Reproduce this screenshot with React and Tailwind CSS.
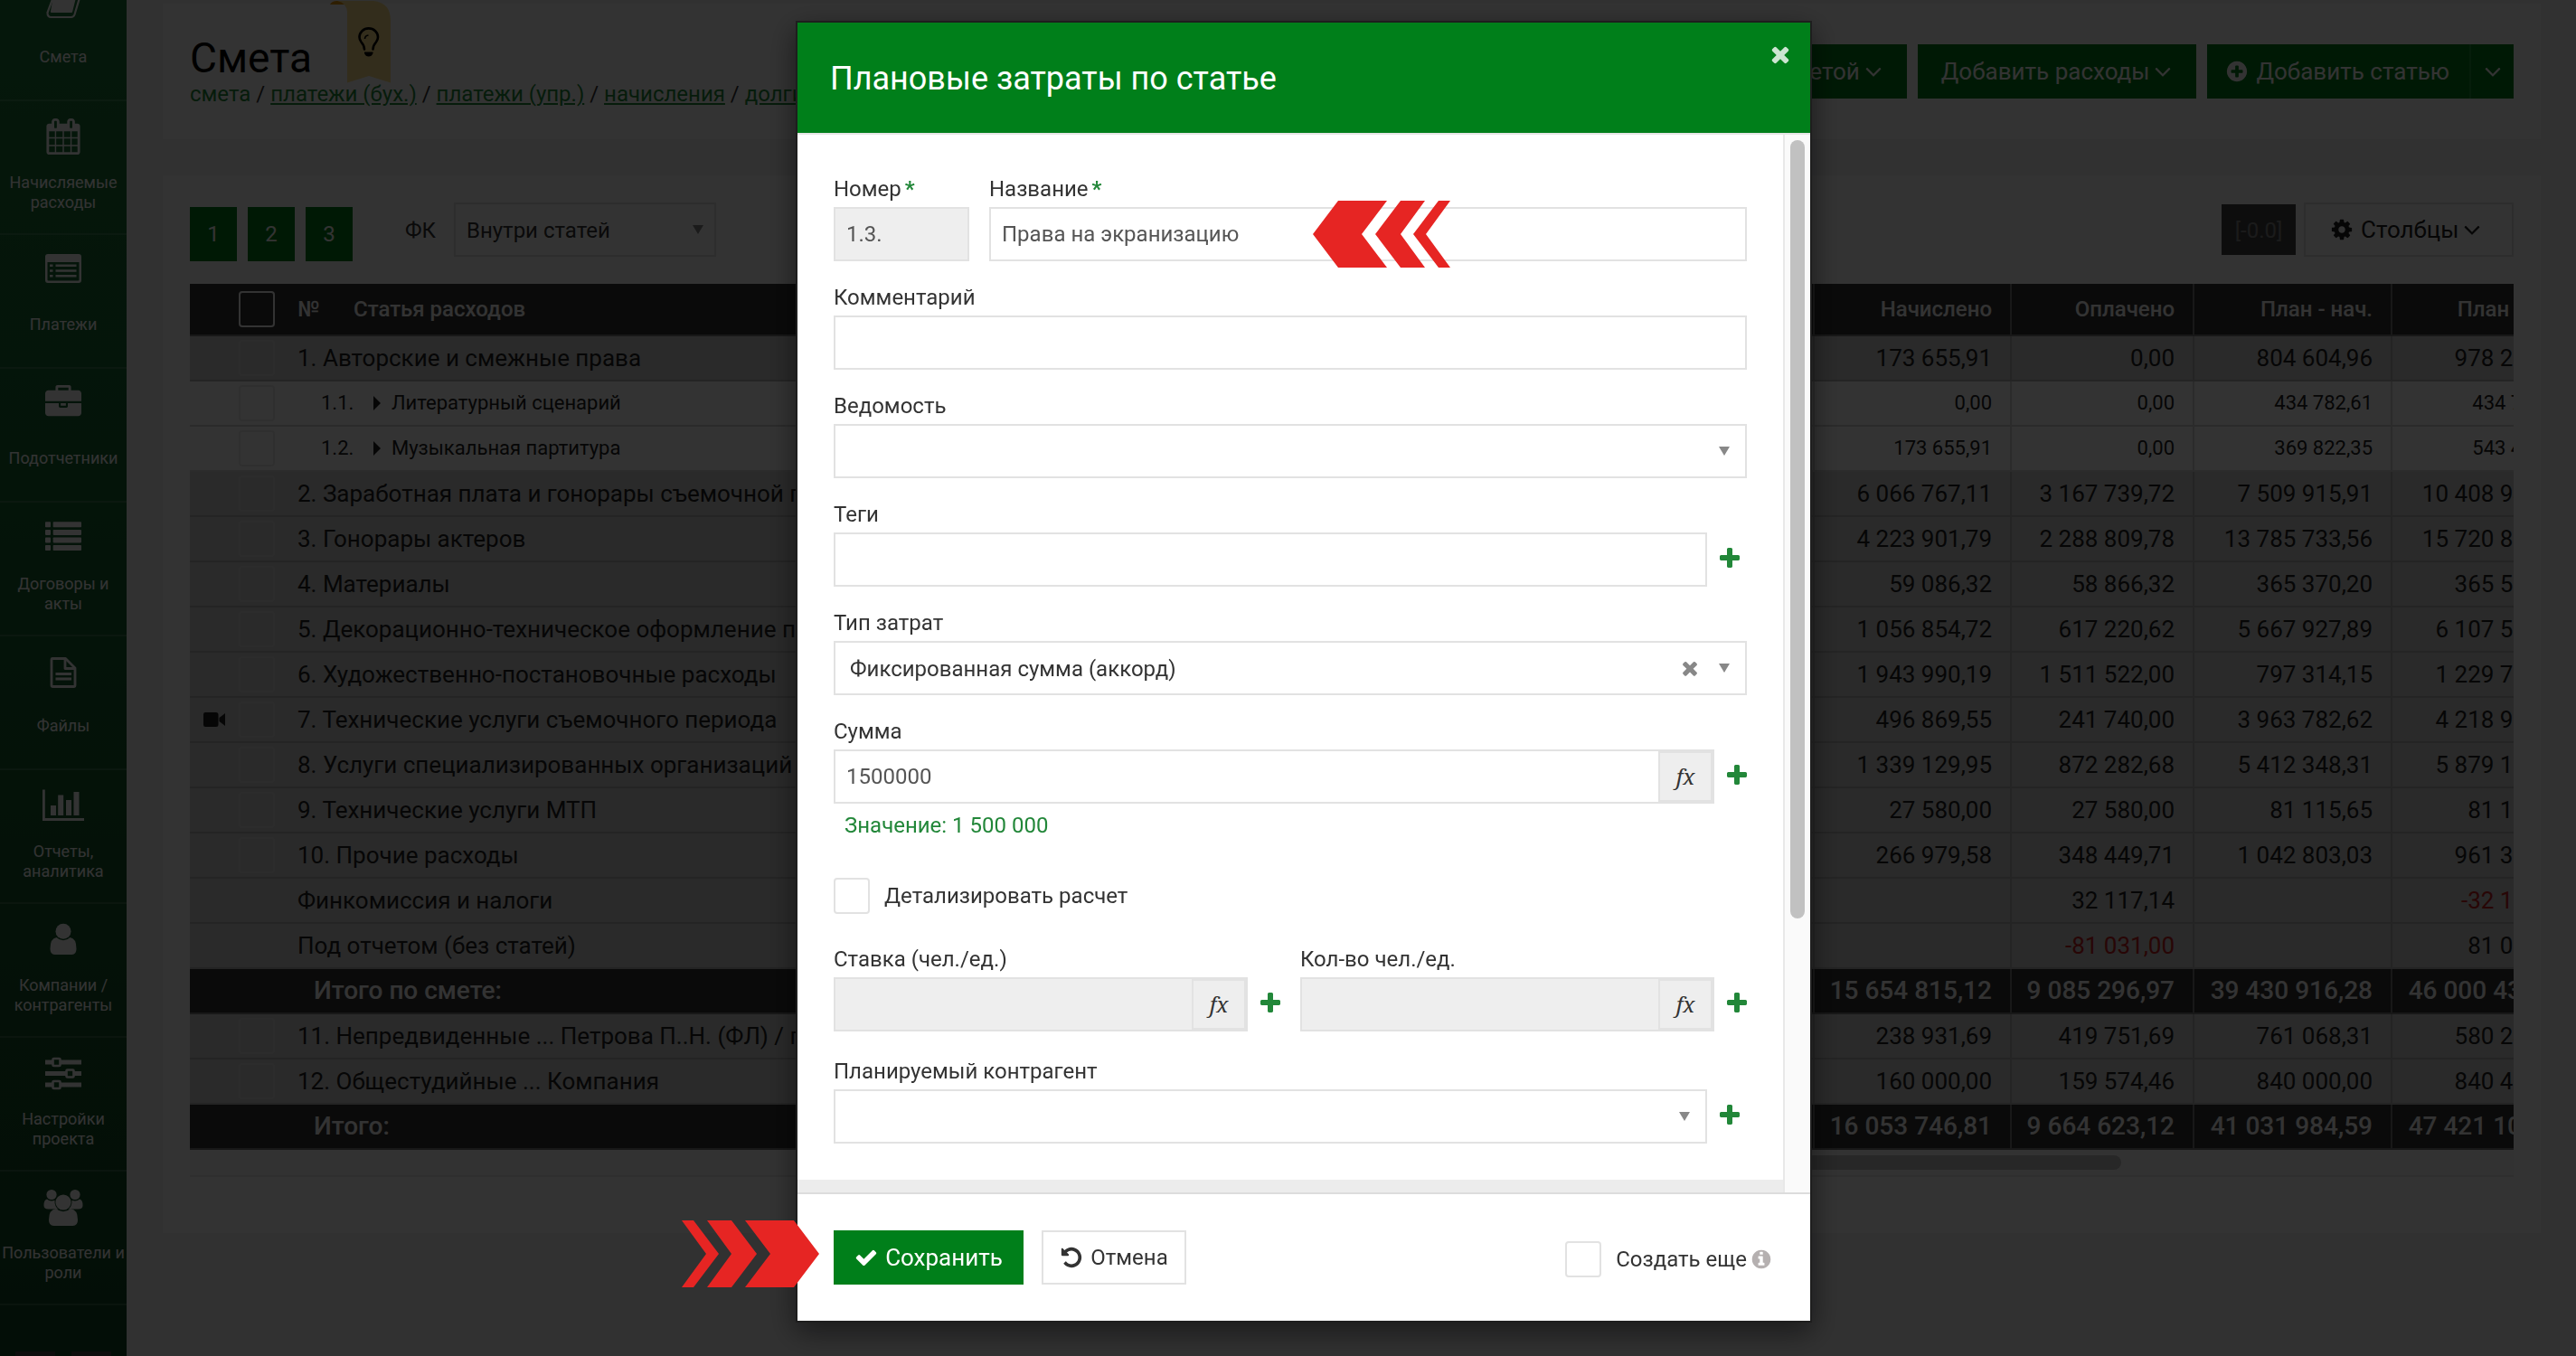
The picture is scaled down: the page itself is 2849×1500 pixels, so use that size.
import React from "react";

const PATHS = {
  times:
    "M1490 1322q0 40-28 68l-136 136q-28 28-68 28t-68-28l-294-294-294 294q-28 28-68 28t-68-28l-136-136q-28-28-28-68t28-68l294-294-294-294q-28-28-28-68t28-68l136-136q28-28 68-28t68 28l294 294 294-294q28-28 68-28t68 28l136 136q28 28 28 68t-28 68l-294 294 294 294q28 28 28 68z",
  plus:
    "M1600 736v192q0 40-28 68t-68 28h-416v416q0 40-28 68t-68 28h-192q-40 0-68-28t-28-68v-416h-416q-40 0-68-28t-28-68v-192q0-40 28-68t68-28h416v-416q0-40 28-68t68-28h192q40 0 68 28t28 68v416h416q40 0 68 28t28 68z",
  check:
    "M1671 566q0 40-28 68l-724 724-136 136q-28 28-68 28t-68-28l-136-136-362-362q-28-28-28-68t28-68l136-136q28-28 68-28t68 28l294 295 656-657q28-28 68-28t68 28l136 136q28 28 28 68z",
  undo:
    "M1664 896q0 156-61 298t-164 245-245 164-298 61q-172 0-327-72.5t-264-204.5q-7-10-6.5-22.5t8.5-20.5l137-138q10-9 25-9 16 2 23 12 73 95 179 147t225 52q104 0 198.5-40.5t163.5-109.5 109.5-163.5 40.5-198.5-40.5-198.5-109.5-163.5-163.5-109.5-198.5-40.5q-98 0-188 35.5t-160 101.5l137 138q31 30 14 69-17 40-59 40h-448q-26 0-45-19t-19-45v-448q0-42 40-59 39-17 69 14l130 129q107-101 244.5-156.5t284.5-55.5q156 0 298 61t245 164 164 245 61 298z",
  info:
    "M1152 1376v-160q0-14-9-23t-23-9h-96v-512q0-14-9-23t-23-9h-320q-14 0-23 9t-9 23v160q0 14 9 23t23 9h96v320h-96q-14 0-23 9t-9 23v160q0 14 9 23t23 9h448q14 0 23-9t9-23zm-128-896v-160q0-14-9-23t-23-9h-192q-14 0-23 9t-9 23v160q0 14 9 23t23 9h192q14 0 23-9t9-23zm640 416q0 209-103 385.5t-279.5 279.5-385.5 103-385.5-103-279.5-279.5-103-385.5 103-385.5 279.5-279.5 385.5-103 385.5 103 279.5 279.5 103 385.5z",
  plusCircle:
    "M1344 960v-128q0-26-19-45t-45-19h-256v-256q0-26-19-45t-45-19h-128q-26 0-45 19t-19 45v256h-256q-26 0-45 19t-19 45v128q0 26 19 45t45 19h256v256q0 26 19 45t45 19h128q26 0 45-19t19-45v-256h256q26 0 45-19t19-45zm320-64q0 209-103 385.5t-279.5 279.5-385.5 103-385.5-103-279.5-279.5-103-385.5 103-385.5 279.5-279.5 385.5-103 385.5 103 279.5 279.5 103 385.5z",
  gear:
    "M1152 896q0-106-75-181t-181-75-181 75-75 181 75 181 181 75 181-75 75-181zm512-109v222q0 12-8 23t-20 13l-185 28q-19 54-39 91 35 50 107 138 10 12 10 25t-9 23q-27 37-99 108t-94 71q-12 0-26-9l-138-108q-44 23-91 38-16 136-29 186-7 28-36 28h-222q-14 0-24.5-8.5t-11.5-21.5l-28-184q-49-16-90-37l-141 107q-10 9-25 9-14 0-25-11-126-114-165-168-7-10-7-23 0-12 8-23 15-21 51-66.5t54-70.5q-27-50-41-99l-183-27q-13-2-21-12.5t-8-23.5v-222q0-12 8-23t19-13l186-28q14-46 39-92-40-57-107-138-10-12-10-24 0-10 9-23 26-36 98.5-107.5t94.5-71.5q13 0 26 10l138 107q44-23 91-38 16-136 29-186 7-28 36-28h222q14 0 24.5 8.5t11.5 21.5l28 184q49 16 90 37l142-107q9-9 24-9 13 0 25 10 129 119 165 170 7 8 7 22 0 12-8 23-15 21-51 66.5t-54 70.5q26 50 41 98l183 28q13 2 21 12.5t8 23.5z",
  angleDown:
    "M1395 736q0 13-10 23l-466 466q-10 10-23 10t-23-10l-466-466q-10-10-10-23t10-23l50-50q10-10 23-10t23 10l393 393 393-393q10-10 23-10t23 10l50 50q10 10 10 23z",
  calendar:
    "M192 1664h288v-288h-288v288zm352 0h320v-288h-320v288zm-352-352h288v-320h-288v320zm352 0h320v-320h-320v320zm-352-384h288v-288h-288v288zm736 736h320v-288h-320v288zm-384-736h320v-288h-320v288zm768 736h288v-288h-288v288zm-384-352h320v-320h-320v320zm-352-864v-288q0-13-9.5-22.5t-22.5-9.5h-64q-13 0-22.5 9.5t-9.5 22.5v288q0 13 9.5 22.5t22.5 9.5h64q13 0 22.5-9.5t9.5-22.5zm736 864h288v-320h-288v320zm-384-384h320v-288h-320v288zm384 0h288v-288h-288v288zm32-480v-288q0-13-9.5-22.5t-22.5-9.5h-64q-13 0-22.5 9.5t-9.5 22.5v288q0 13 9.5 22.5t22.5 9.5h64q13 0 22.5-9.5t9.5-22.5zm384-64v1280q0 52-38 90t-90 38h-1408q-52 0-90-38t-38-90v-1280q0-52 38-90t90-38h128v-96q0-66 47-113t113-47h64q66 0 113 47t47 113v96h384v-96q0-66 47-113t113-47h64q66 0 113 47t47 113v96h128q52 0 90 38t38 90z",
  briefcase:
    "M640 256h512v-128h-512v128zm1152 640v480q0 66-47 113t-113 47h-1472q-66 0-113-47t-47-113v-480h672v160q0 26 19 45t45 19h320q26 0 45-19t19-45v-160h672zm-768 0v128h-256v-128h256zm768-480v384h-1792v-384q0-66 47-113t113-47h352v-160q0-40 28-68t68-28h576q40 0 68 28t28 68v160h352q66 0 113 47t47 113z",
};

function Icon({ name, className }) {
  return (
    <svg viewBox="0 0 1792 1792" fill="currentColor" aria-hidden="true" className={className}>
      <path d={PATHS[name]} />
    </svg>
  );
}

const NAV = [
  {
    label: "Смета",
    icon: (
      <g fill="none" stroke="currentColor" strokeWidth="2.2" strokeLinejoin="round">
        <path d="M15 6h24L32 34H10z" fill="currentColor" />
        <path d="M14 12L5.500 35q0 5 4 5h22q3 0 4-3L43 12" />
      </g>
    ),
  },
  { label: "Начисляемые расходы", icon: <path transform="translate(3 4) scale(.02232)" d={PATHS.calendar} /> },
  {
    label: "Платежи",
    icon: (
      <g>
        <path fillRule="evenodd" d="M6 6h34q3 0 3 3v26q0 3-3 3H6q-3 0-3-3V9q0-3 3-3zM5.500 15v19.500q0 1 1 1h33q1 0 1-1V15z" />
        <path d="M8 17.500h3.500v2.500H8zM14.500 17.500h23v2.500h-23zM8 23.300h3.500v2.500H8zM14.500 23.300h23v2.500h-23zM8 29h3.500v2.500H8zM14.500 29h23v2.500h-23z" />
      </g>
    ),
  },
  { label: "Подотчетники", icon: <path transform="translate(3 3) scale(.02232)" d={PATHS.briefcase} /> },
  {
    label: "Договоры и акты",
    icon: (
      <g>
        {[6.3, 14.9, 23.4, 32].map((y) => (
          <g key={y}>
            <rect x="3" y={y} width="6" height="6" rx=".8" />
            <rect x="11.700" y={y} width="31.300" height="6" rx=".8" />
          </g>
        ))}
      </g>
    ),
  },
  {
    label: "Файлы",
    icon: (
      <g fill="none" stroke="currentColor" strokeWidth="2.8" strokeLinejoin="round">
        <path d="M11 9.500h14.500l10.500 10.500V39q0 1.500-1.500 1.500h-23q-1.500 0-1.500-1.500V11q0-1.500 1-1.500z" />
        <path d="M25 9.500V20.500H36M14.500 26.500h17.500M14.500 32h17.500" />
      </g>
    ),
  },
  {
    label: "Отчеты, аналитика",
    icon: <path d="M0 6.500h2.800V38H46v3H0zM9 24h6v11H9zM17.200 12.500h6V35h-6zM26 18h6v17h-6zM34.500 9h6v26h-6z" />,
  },
  {
    label: "Компании / контрагенты",
    icon: (
      <g>
        <circle cx="23" cy="15.200" r="8.500" />
        <path d="M15.500 22q3.300 3.200 7.500 3.200t7.500-3.200q7 1 7 12.500 0 6.500-5 6.500h-19q-5 0-5-6.500Q8.500 23 15.500 22z" />
      </g>
    ),
  },
  {
    label: "Настройки проекта",
    icon: (
      <g>
        <path d="M3 9.500h40v5H3zM3 22h40v5H3zM3 34.500h40v5H3z" />
        {[[15.5, 12], [30.5, 24.5], [15.5, 37]].map(([x, y]) => (
          <rect key={y} x={x - 4} y={y - 4} width="8" height="8" rx="1" fill="#185a2b" stroke="currentColor" strokeWidth="2.6" />
        ))}
      </g>
    ),
  },
  {
    label: "Пользователи и роли",
    icon: (
      <g>
        <circle cx="10" cy="10.500" r="5.600" />
        <circle cx="36" cy="10.500" r="5.600" />
        <path d="M5 15.500q2 2 5 2 2 0 3.500-.7-.3 7 4 9.700h-11q-5 0-5-4 0-6.500 3.500-7zM41 15.500q-2 2-5 2-2 0-3.500-.7.300 7-4 9.700h11q5 0 5-4 0-6.500-3.500-7z" />
        <circle cx="23" cy="19" r="8.600" />
        <path d="M15 26q3.500 3.200 8 3.200t8-3.200q8 1 8 12.500 0 6.500-5.500 6.500h-21Q7 45 7 38.500 7 27 15 26z" />
      </g>
    ),
  },
];

const ROWS = [
  { name: "1. Авторские и смежные права", v: ["173 655,91", "0,00", "804 604,96", "978 260,87"] },
  { kind: "sub", num: "1.1.", name: "Литературный сценарий", v: ["0,00", "0,00", "434 782,61", "434 782,61"] },
  { kind: "sub", num: "1.2.", name: "Музыкальная партитура", v: ["173 655,91", "0,00", "369 822,35", "543 478,26"] },
  { name: "2. Заработная плата и гонорары съемочной группы", v: ["6 066 767,11", "3 167 739,72", "7 509 915,91", "10 408 943,30"] },
  { name: "3. Гонорары актеров", v: ["4 223 901,79", "2 288 809,78", "13 785 733,56", "15 720 825,57"] },
  { name: "4. Материалы", v: ["59 086,32", "58 866,32", "365 370,20", "365 590,20"] },
  { name: "5. Декорационно-техническое оформление площадок", v: ["1 056 854,72", "617 220,62", "5 667 927,89", "6 107 561,99"] },
  { name: "6. Художественно-постановочные расходы", v: ["1 943 990,19", "1 511 522,00", "797 314,15", "1 229 782,34"] },
  { name: "7. Технические услуги съемочного периода", camera: true, v: ["496 869,55", "241 740,00", "3 963 782,62", "4 218 912,17"] },
  { name: "8. Услуги специализированных организаций", v: ["1 339 129,95", "872 282,68", "5 412 348,31", "5 879 195,58"] },
  { name: "9. Технические услуги МТП", v: ["27 580,00", "27 580,00", "81 115,65", "81 115,65"] },
  { name: "10. Прочие расходы", v: ["266 979,58", "348 449,71", "1 042 803,03", "961 332,90"] },
  { kind: "plain", name: "Финкомиссия и налоги", v: ["", "32 117,14", "", "-32 117,14"] },
  { kind: "plain", name: "Под отчетом (без статей)", v: ["", "-81 031,00", "", "81 031,00"] },
  { kind: "total", name: "Итого по смете:", v: ["15 654 815,12", "9 085 296,97", "39 430 916,28", "46 000 434,43"] },
  { name: "11. Непредвиденные ... Петрова П..Н. (ФЛ) / прочее", v: ["238 931,69", "419 751,69", "761 068,31", "580 248,31"] },
  { name: "12. Общестудийные ... Компания", v: ["160 000,00", "159 574,46", "840 000,00", "840 425,54"] },
  { kind: "total", name: "Итого:", v: ["16 053 746,81", "9 664 623,12", "41 031 984,59", "47 421 108,28"] },
];

const HEADS = ["Начислено", "Оплачено", "План - нач.", "План - опл."];

function Sidebar() {
  return (
    <nav className="w-[140px] shrink-0 overflow-hidden bg-linear-to-b from-[#1a7538] to-[#124723] text-white">
      <ul className="-mt-[38px]">
        {NAV.map((n) => (
          <li key={n.label} className="h-[148px] border-t-2 border-white/15">
            <a href="#" className="flex flex-col items-center pt-[15px]">
              <svg viewBox="0 0 46 46" className="size-[46px]" fill="currentColor" aria-hidden="true">
                {n.icon}
              </svg>
              <span
                className={`mt-[18px] flex w-[140px] items-center justify-center text-center text-lg leading-[22px] ${n.label.includes(" ") ? "h-11" : "h-10"}`}
              >
                {n.label}
              </span>
            </a>
          </li>
        ))}
        <li className="flex justify-center gap-[18px] border-t-2 border-white/15 pt-[51px]">
          <span className="h-10 w-11 bg-[#444]" />
          <span className="h-10 w-11 bg-[#444]" />
        </li>
      </ul>
    </nav>
  );
}

function BgCheckbox({ className }) {
  return <input type="checkbox" aria-label="Выбрать строку" className={`size-10 shrink-0 appearance-none rounded-sm border-2 ${className}`} />;
}

const ROW_STYLE = {
  main: "bg-[#d0d0d0] text-[26px] text-[#222]",
  plain: "bg-[#d0d0d0] text-[26px] text-[#222]",
  sub: "bg-white text-[22px] text-[#222]",
  total: "bg-[#333] text-[28px] font-medium text-white",
};
const LINE_STYLE = {
  main: "border-[#b4b4b4]",
  plain: "border-[#b4b4b4]",
  sub: "border-[#d4d4d4]",
  total: "border-[#777]",
};

function EstimateTable() {
  return (
    <div className="overflow-hidden">
      <div className="-mr-[83px]">
        <table className="w-full table-fixed border-separate border-spacing-0 leading-8">
          <colgroup>
            <col />
            <col className="w-[218px]" />
            <col className="w-[202px]" />
            <col className="w-[219px]" />
            <col className="w-[219px]" />
          </colgroup>
          <thead>
            <tr className="h-[58px] bg-[#333] text-2xl text-white">
              <th className="border-b-2 border-[#777] p-0 font-medium">
                <div className="flex items-center">
                  <BgCheckbox className="ml-[54px] border-white" />
                  <span className="ml-[25px] w-[62px] text-left">№</span>
                  <span>Статья расходов</span>
                </div>
              </th>
              {HEADS.map((h) => (
                <th key={h} className="border-b-2 border-l-2 border-[#777] p-0 pr-5 text-right font-medium">
                  {h}
                </th>
              ))}
            </tr>
          </thead>
          <tbody>
            {ROWS.map((r) => {
              const kind = r.kind || "main";
              return (
                <tr key={r.name} className={`h-[50px] ${ROW_STYLE[kind]}`}>
                  <td className={`border-b-2 p-0 ${LINE_STYLE[kind]}`}>
                    {kind === "total" && <span className="pl-[137px]">{r.name}</span>}
                    {kind === "plain" && <span className="pl-[119px]">{r.name}</span>}
                    {kind === "main" && (
                      <div className="flex items-center">
                        <span className="flex w-[54px] pl-[15px]">
                          {r.camera && (
                            <svg viewBox="0 0 24 16" className="h-4 w-6" fill="currentColor" aria-label="Видео">
                              <path d="M2 0h12q2.500 0 2.500 2.500v11q0 2.500-2.500 2.500H2q-2 0-2-2V2q0-2 2-2zM17.500 6L24 1v14l-6.500-5z" />
                            </svg>
                          )}
                        </span>
                        <BgCheckbox className="border-[#dcdcdc]" />
                        <span className="ml-[25px] whitespace-nowrap">{r.name}</span>
                      </div>
                    )}
                    {kind === "sub" && (
                      <div className="flex items-center">
                        <BgCheckbox className="ml-[54px] border-[#ececec]" />
                        <span className="ml-[51px] w-[58px]">{r.num}</span>
                        <svg viewBox="0 0 8 16" className="mr-3 h-4 w-2" fill="currentColor" aria-hidden="true">
                          <path d="M0 0l8 8-8 8z" />
                        </svg>
                        <span>{r.name}</span>
                      </div>
                    )}
                  </td>
                  {r.v.map((v, i) => (
                    <td
                      key={i}
                      className={`border-b-2 border-l-2 p-0 pr-5 text-right whitespace-nowrap ${LINE_STYLE[kind]} ${v.startsWith("-") ? "text-[#c81e1e]" : ""}`}
                    >
                      {v}
                    </td>
                  ))}
                </tr>
              );
            })}
          </tbody>
        </table>
      </div>
      <div className="flex h-[30px] justify-end border-b-2 border-[#e8e8e8] bg-[#fafafa] pt-1.5 pr-[434px]">
        <span className="h-4 w-[1340px] rounded-lg bg-[#c1c1c1]" />
      </div>
    </div>
  );
}

function GreenButton({ children, className }) {
  return (
    <button type="button" className={`flex h-[60px] items-center bg-[#007f1a] text-[26px] whitespace-nowrap text-white ${className}`}>
      {children}
    </button>
  );
}

function Page() {
  return (
    <div className="min-w-0 flex-1 pr-[39px] pl-10">
      <header className="mt-1 flex h-[150px] justify-between bg-white px-[30px]">
        <div>
          <div className="flex h-[84px]">
            <h1 className="mt-9 text-[46px] leading-12 text-black">Смета</h1>
            <svg viewBox="0 0 68 92" className="-mt-1 ml-5 h-[94px] w-[68px]" aria-label="Подсказка">
              <path d="M0 4q2-4 8-4h9v4z" fill="#e69500" />
              <path d="M8 0h40q19 2 19 22v68.500l-24-7.500-24 7.500V12Q18 2 8 0z" fill="#ffe08a" />
              <g fill="none" stroke="#000" strokeWidth="2.600">
                <path d="M38 53.500q0-4-3.500-8-2-2.500-2-5.500a8.500 8 0 0 1 20.500 0q0 3-2 5.500-3.500 4-3.500 8" strokeLinecap="round" />
                <path d="M38.500 42q0-3.500 4-4" strokeWidth="1.600" />
              </g>
              <path d="M38 56.500h9.500v1.500q-1.500 3.500-4.800 3.500T38 58z" fill="#000" />
            </svg>
          </div>
          <p className="text-2xl leading-8 text-[#333]">
            <span className="text-[#1f8a3b]">смета</span> /{" "}
            <a href="#" className="text-[#1f8a3b] underline">платежи (бух.)</a> /{" "}
            <a href="#" className="text-[#1f8a3b] underline">платежи (упр.)</a> /{" "}
            <a href="#" className="text-[#1f8a3b] underline">начисления</a> /{" "}
            <a href="#" className="text-[#1f8a3b] underline">долги</a>
          </p>
        </div>
        <div className="flex gap-3 pt-[45px]">
          <GreenButton className="pr-[22px] pl-[26px]">
            Действия со сметой <Icon name="angleDown" className="size-[30px]" />
          </GreenButton>
          <GreenButton className="pr-[22px] pl-[26px]">
            Добавить расходы <Icon name="angleDown" className="size-[30px]" />
          </GreenButton>
          <div className="flex">
            <GreenButton className="gap-2 pr-[22px] pl-5">
              <Icon name="plusCircle" className="size-[26px]" />
              Добавить статью
            </GreenButton>
            <GreenButton className="w-[49px] justify-center border-l-2 border-[#1e9338]">
              <Icon name="angleDown" className="size-[30px]" />
            </GreenButton>
          </div>
        </div>
      </header>

      <section className="mt-10 bg-white px-[30px] pt-[30px] pb-[62px]">
        <div className="flex h-[90px] items-start justify-between">
          <div className="flex items-start">
            <div className="mt-[5px] flex gap-3">
              {["1", "2", "3"].map((n) => (
                <button key={n} type="button" className="h-[60px] w-[52px] bg-[#007f1a] text-2xl text-white">
                  {n}
                </button>
              ))}
            </div>
            <label htmlFor="fk" className="ml-[58px] text-2xl leading-[62px] text-[#333]">ФК</label>
            <div className="relative ml-5">
              <select id="fk" className="h-[60px] w-[290px] appearance-none border-2 border-[#e2e2e2] bg-white pt-0.5 pl-3 text-2xl text-[#333]">
                <option>Внутри статей</option>
              </select>
              <Caret className="right-[14px]" />
            </div>
          </div>
          <div className="flex items-center gap-[9px]">
            <button type="button" className="h-14 w-[82px] bg-[#444] pt-0.5 text-2xl text-[#888]">[-0.0]</button>
            <button type="button" className="flex h-[60px] w-[232px] items-center border-2 border-[#e2e2e2] pl-[27px] text-[26px] text-[#222]">
              <Icon name="gear" className="mr-2 size-[26px]" />
              Столбцы
              <Icon name="angleDown" className="size-[30px]" />
            </button>
          </div>
        </div>
        <EstimateTable />
      </section>
    </div>
  );
}

function Caret({ className }) {
  return (
    <svg viewBox="0 0 12 10" fill="#888" aria-hidden="true" className={`pointer-events-none absolute top-[25px] h-2.5 w-3 ${className}`}>
      <path d="M0 0h12L6 10z" />
    </svg>
  );
}

const BOX = "h-[60px] border-2 border-[#e2e2e2] text-2xl text-[#555] px-3";

function Label({ htmlFor, required, children }) {
  return (
    <label htmlFor={htmlFor} className="mb-1 flex h-9 items-center gap-1 pt-1 text-2xl whitespace-nowrap text-[#333]">
      {children}
      {required && <span className="font-bold text-[#228739]">*</span>}
    </label>
  );
}

function AddButton({ label }) {
  return (
    <button type="button" aria-label={label} className="ml-3.5 flex h-[58px] w-[22px] shrink-0 items-center justify-center text-[#228739]">
      <Icon name="plus" className="size-7 shrink-0" />
    </button>
  );
}

function FormulaField({ id, label, value, disabled }) {
  return (
    <div className="min-w-0 flex-1">
      <Label htmlFor={id}>{label}</Label>
      <div className="flex">
        <input id={id} defaultValue={value} disabled={disabled} className={`${BOX} min-w-0 flex-1 border-r-0 ${disabled ? "bg-[#eee]" : "bg-white"}`} />
        <button
          type="button"
          aria-label="Формула"
          className="h-[60px] w-[62px] border-4 border-l-2 border-[#e2e2e2] bg-[#eee] font-['Noto_Serif','Liberation_Serif',serif] text-2xl text-[#333] italic"
        >
          fx
        </button>
        <AddButton label={`Добавить: ${label}`} />
      </div>
    </div>
  );
}

function Select({ id, value, clearable }) {
  return (
    <div className="relative flex-1">
      <select id={id} defaultValue={value} className="h-[60px] w-full appearance-none border-2 border-[#e2e2e2] bg-white px-4 pt-0.5 text-2xl text-[#333]">
        <option>{value}</option>
      </select>
      {clearable && (
        <button type="button" aria-label="Очистить" className="absolute top-[18px] right-[51px] text-[#888]">
          <Icon name="times" className="size-6" />
        </button>
      )}
      <Caret className="right-[19px]" />
    </div>
  );
}

function Chevrons({ flip, className }) {
  return (
    <svg viewBox="0 0 152 74" fill="#e62523" aria-hidden="true" className={`pointer-events-none absolute h-[74px] w-[152px] ${className}`}>
      <g transform={flip ? "translate(152 0) scale(-1 1)" : undefined}>
        <path d="M0 37L28 0h54L54 37l28 37H28z" />
        <path d="M69 37L97 0h27L97 37l27 37H97z" />
        <path d="M111 37l28-37h13l-27 37 27 37h-13z" />
      </g>
    </svg>
  );
}

const TICK = "size-10 shrink-0 appearance-none rounded-sm border-2 border-[#e2e2e2] bg-white checked:bg-[#007f1a]";

function Modal() {
  return (
    <div className="fixed inset-0 flex items-start justify-center bg-black/80 pt-[23px] pl-[35px]">
      <div role="dialog" aria-labelledby="dlg-title" className="w-[1124px] border-2 border-[#1e1e1e] bg-white bg-clip-padding shadow-[0_10px_30px_rgba(0,0,0,0.5)]">
        <div className="relative flex h-[124px] items-center border-b-2 border-[#e5e5e5] bg-[#007f1a] pt-0.5 pl-9">
          <h2 id="dlg-title" className="text-[36px] leading-[44px] text-white">Плановые затраты по статье</h2>
          <button type="button" aria-label="Закрыть" className="absolute top-[21px] right-[19px] text-white/80">
            <Icon name="times" className="size-7" />
          </button>
        </div>

        <div className="flex">
          <form className="min-w-0 flex-1">
            <div className="flex flex-col gap-5 px-10 pt-10 pb-10">
              <div className="flex gap-[22px]">
                <div className="w-[150px]">
                  <Label htmlFor="num" required>Номер</Label>
                  <input id="num" disabled defaultValue="1.3." className={`${BOX} w-full bg-[#eee]`} />
                </div>
                <div className="relative flex-1">
                  <Label htmlFor="title" required>Название</Label>
                  <input id="title" defaultValue="Права на экранизацию" className={`${BOX} w-full bg-white`} />
                  <Chevrons className="top-[33px] left-[358px]" />
                </div>
              </div>
              <div>
                <Label htmlFor="comment">Комментарий</Label>
                <input id="comment" className={`${BOX} w-full bg-white`} />
              </div>
              <div>
                <Label htmlFor="sheet">Ведомость</Label>
                <Select id="sheet" value="" />
              </div>
              <div>
                <Label htmlFor="tags">Теги</Label>
                <div className="flex pr-2">
                  <input id="tags" className={`${BOX} min-w-0 flex-1 bg-white`} />
                  <AddButton label="Добавить тег" />
                </div>
              </div>
              <div>
                <Label htmlFor="type">Тип затрат</Label>
                <Select id="type" value="Фиксированная сумма (аккорд)" clearable />
              </div>
              <div>
                <FormulaField id="sum" label="Сумма" value="1500000" />
                <p className="mt-2 pl-3 text-2xl leading-8 text-[#228739]">Значение: 1 500 000</p>
              </div>
              <label className="mt-[22px] flex items-center gap-4 text-2xl text-[#333]">
                <input type="checkbox" className={TICK} />
                Детализировать расчет
              </label>
              <div className="mt-[10px] flex gap-[22px]">
                <FormulaField id="rate" label="Ставка (чел./ед.)" disabled />
                <FormulaField id="qty" label="Кол-во чел./ед." disabled />
              </div>
              <div className="mt-1">
                <Label htmlFor="agent">Планируемый контрагент</Label>
                <div className="flex pr-2">
                  <Select id="agent" value="" />
                  <AddButton label="Добавить контрагента" />
                </div>
              </div>
            </div>
            <div className="h-[14px] bg-[#ececec]" />
          </form>
          <div className="w-[30px] border-l-2 border-[#e8e8e8] bg-[#fafafa] pt-1.5">
            <div className="mx-auto h-[74%] w-4 rounded-lg bg-[#c1c1c1]" />
          </div>
        </div>

        <div className="relative flex items-center border-t-2 border-[#dcdcdc] px-10 pt-10 pb-10">
          <Chevrons flip className="top-[29px] -left-[128px]" />
          <button type="button" className="flex h-[60px] w-[210px] items-center justify-center gap-2 bg-[#007f1a] text-[26px] text-white">
            <Icon name="check" className="size-[26px]" />
            Сохранить
          </button>
          <button type="button" className="ml-5 flex h-[60px] w-40 items-center justify-center gap-2 border-2 border-[#e2e2e2] text-2xl text-[#333]">
            <Icon name="undo" className="size-[26px]" />
            Отмена
          </button>
          <label className="ml-auto flex items-center gap-4 pt-1 text-2xl text-[#333]">
            <input type="checkbox" className={TICK} />
            Создать еще
          </label>
          <Icon name="info" className="mt-1 mr-0.5 ml-1 size-6 text-[#b5b0b0]" />
        </div>
      </div>
    </div>
  );
}

export default function App() {
  return (
    <div className="flex h-screen overflow-hidden bg-[#f3f3f4] font-['Roboto',sans-serif]">
      <Sidebar />
      <Page />
      <Modal />
    </div>
  );
}
